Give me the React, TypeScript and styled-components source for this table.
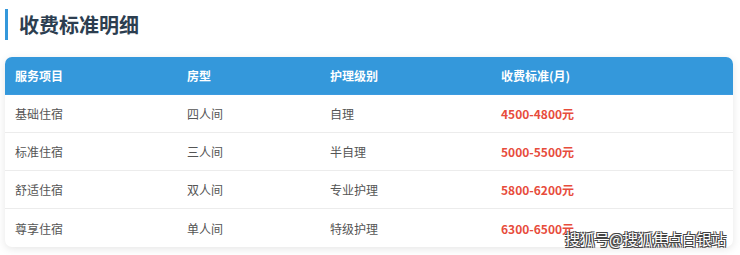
import styled, { createGlobalStyle } from "styled-components";

interface FeeRow {
  service: string;
  room: string;
  care: string;
  price: string;
}

const rows: FeeRow[] = [
  { service: "基础住宿", room: "四人间", care: "自理", price: "4500-4800元" },
  { service: "标准住宿", room: "三人间", care: "半自理", price: "5000-5500元" },
  { service: "舒适住宿", room: "双人间", care: "专业护理", price: "5800-6200元" },
  { service: "尊享住宿", room: "单人间", care: "特级护理", price: "6300-6500元" },
];

const headers = ["服务项目", "房型", "护理级别", "收费标准(月)"];

export default function App() {
  return (
    <>
      <GlobalStyle />
      <Page>
        <Title>收费标准明细</Title>
        <Card>
          <HeaderRow>
            {headers.map((h) => (
              <HeaderCell key={h}>{h}</HeaderCell>
            ))}
          </HeaderRow>
          {rows.map((row) => (
            <BodyRow key={row.service}>
              <Cell>{row.service}</Cell>
              <Cell>{row.room}</Cell>
              <Cell>{row.care}</Cell>
              <Cell highlight>{row.price}</Cell>
            </BodyRow>
          ))}
        </Card>
        <Watermark>搜狐号@搜狐焦点白银站</Watermark>
      </Page>
    </>
  );
}

const GlobalStyle = createGlobalStyle`
  body {
    margin: 0;
    background: #ffffff;
    font-family: "Noto Sans CJK SC", "Noto Sans", sans-serif;
  }
`;

const Page = styled.div`
  position: relative;
  width: 740px;
  height: 255px;
  padding: 9px 7px 0 5px;
  box-sizing: border-box;
  overflow: hidden;
`;

const Title = styled.h2`
  margin: 0 0 17px;
  height: 31px;
  line-height: 31px;
  padding-left: 11px;
  border-left: 3px solid #3498db;
  font-size: 20px;
  font-weight: 700;
  color: #2c3e50;
`;

const Card = styled.div`
  width: 728px;
  border-radius: 7px;
  overflow: hidden;
  background: #ffffff;
  box-shadow: 0 2px 8px rgba(0, 0, 0, 0.1);
`;

const grid = `
  display: grid;
  grid-template-columns: 172px 143px 171px 1fr;
  align-items: center;
`;

const HeaderRow = styled.div`
  ${grid}
  height: 37px;
  background: #3498db;
  border-bottom: 1px solid #3d9be0;
`;

const HeaderCell = styled.div`
  padding-left: 10px;
  font-size: 12px;
  font-weight: 700;
  color: #ffffff;
`;

const BodyRow = styled.div`
  ${grid}
  height: 37px;
  border-bottom: 1px solid #ececec;

  &:last-child {
    height: 38px;
    border-bottom: none;
  }
`;

const Cell = styled.div<{ highlight?: boolean }>`
  padding-left: 10px;
  font-size: 12px;
  font-weight: ${({ highlight }) => (highlight ? 700 : 400)};
  color: ${({ highlight }) => (highlight ? "#e74c3c" : "#555555")};
`;

const Watermark = styled.div`
  position: absolute;
  left: 565px;
  top: 228px;
  font-size: 15px;
  font-weight: 400;
  color: #ffffff;
  letter-spacing: -0.3px;
  text-shadow: 1px 1px 0 #444, -1px -1px 0 #444, 1px -1px 0 #444,
    -1px 1px 0 #444;
`;
